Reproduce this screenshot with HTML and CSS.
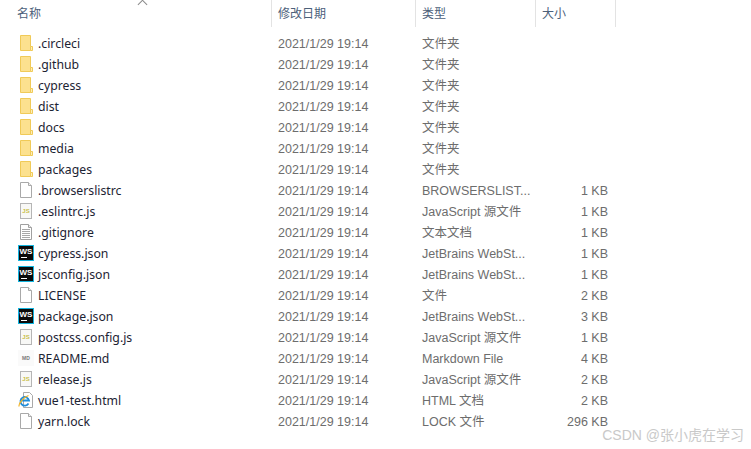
FILE: index.html
```html
<!DOCTYPE html>
<html lang="zh">

<head>
  <meta charset="UTF-8">
  <title>文件列表</title>
  <link rel="stylesheet" href="styles.css">
</head>

<body>
  <svg class="defs" width="0" height="0">
    <symbol id="i-folder" viewBox="0 0 16 16">
      <path d="M2.500.5h10v15h-10z" fill="#fce18f" stroke="#f0ca58" />
      <path d="M12.500 11.500h2v4h-2z" fill="#fdeeb8" stroke="#f0ca58" />
    </symbol>
    <symbol id="i-file" viewBox="0 0 16 16">
      <path d="M2.500.5h8l3 3v12h-11z" fill="#fff" stroke="#a9a9a9" />
      <path d="M10.500.5v3h3" fill="#f2f2f2" stroke="#a9a9a9" />
    </symbol>
    <symbol id="i-text" viewBox="0 0 16 16">
      <path d="M2.500.5h8l3 3v12h-11z" fill="#fff" stroke="#a0a0a0" />
      <path d="M10.500.5v3h3" fill="#eee" stroke="#a0a0a0" />
      <path d="M4 5.500h8M4 7.500h8M4 9.500h8M4 11.500h8M4 13.500h8" stroke="#a8a8a8" />
    </symbol>
    <symbol id="i-html" viewBox="0 0 16 16">
      <path d="M5.500.5h6l3 3v12h-9z" fill="#fff" stroke="#a9a9a9" />
      <path d="M10.500 11.500A4.300 4.300 0 1 1 11 8.500H3.500" fill="none" stroke="#1f8ddb" stroke-width="1.800" />
      <path d="M1 14.500C.5 11 6 5 10.500 3.500" fill="none" stroke="#f0b429" stroke-width="1.200" />
    </symbol>
  </svg>

  <div class="list-head">
    <div class="head-cell head-name">名称<span class="sort-arrow"></span></div>
    <div class="head-cell">修改日期</div>
    <div class="head-cell">类型</div>
    <div class="head-cell">大小</div>
  </div>

  <div class="list-body">
    <div class="row"><span class="name"><svg class="icon"><use href="#i-folder" /></svg>.circleci</span><span>2021/1/29 19:14</span><span>文件夹</span><span class="size"></span></div>
    <div class="row"><span class="name"><svg class="icon"><use href="#i-folder" /></svg>.github</span><span>2021/1/29 19:14</span><span>文件夹</span><span class="size"></span></div>
    <div class="row"><span class="name"><svg class="icon"><use href="#i-folder" /></svg>cypress</span><span>2021/1/29 19:14</span><span>文件夹</span><span class="size"></span></div>
    <div class="row"><span class="name"><svg class="icon"><use href="#i-folder" /></svg>dist</span><span>2021/1/29 19:14</span><span>文件夹</span><span class="size"></span></div>
    <div class="row"><span class="name"><svg class="icon"><use href="#i-folder" /></svg>docs</span><span>2021/1/29 19:14</span><span>文件夹</span><span class="size"></span></div>
    <div class="row"><span class="name"><svg class="icon"><use href="#i-folder" /></svg>media</span><span>2021/1/29 19:14</span><span>文件夹</span><span class="size"></span></div>
    <div class="row"><span class="name"><svg class="icon"><use href="#i-folder" /></svg>packages</span><span>2021/1/29 19:14</span><span>文件夹</span><span class="size"></span></div>
    <div class="row"><span class="name"><svg class="icon"><use href="#i-file" /></svg>.browserslistrc</span><span>2021/1/29 19:14</span><span>BROWSERSLIST...</span><span class="size">1 KB</span></div>
    <div class="row"><span class="name"><i class="icon-js">JS</i>.eslintrc.js</span><span>2021/1/29 19:14</span><span>JavaScript 源文件</span><span class="size">1 KB</span></div>
    <div class="row"><span class="name"><svg class="icon"><use href="#i-text" /></svg>.gitignore</span><span>2021/1/29 19:14</span><span>文本文档</span><span class="size">1 KB</span></div>
    <div class="row"><span class="name"><i class="icon-ws">WS</i>cypress.json</span><span>2021/1/29 19:14</span><span>JetBrains WebSt...</span><span class="size">1 KB</span></div>
    <div class="row"><span class="name"><i class="icon-ws">WS</i>jsconfig.json</span><span>2021/1/29 19:14</span><span>JetBrains WebSt...</span><span class="size">1 KB</span></div>
    <div class="row"><span class="name"><svg class="icon"><use href="#i-file" /></svg>LICENSE</span><span>2021/1/29 19:14</span><span>文件</span><span class="size">2 KB</span></div>
    <div class="row"><span class="name"><i class="icon-ws">WS</i>package.json</span><span>2021/1/29 19:14</span><span>JetBrains WebSt...</span><span class="size">3 KB</span></div>
    <div class="row"><span class="name"><i class="icon-js">JS</i>postcss.config.js</span><span>2021/1/29 19:14</span><span>JavaScript 源文件</span><span class="size">1 KB</span></div>
    <div class="row"><span class="name"><i class="icon-md">MD</i>README.md</span><span>2021/1/29 19:14</span><span>Markdown File</span><span class="size">4 KB</span></div>
    <div class="row"><span class="name"><i class="icon-js">JS</i>release.js</span><span>2021/1/29 19:14</span><span>JavaScript 源文件</span><span class="size">2 KB</span></div>
    <div class="row"><span class="name"><svg class="icon"><use href="#i-html" /></svg>vue1-test.html</span><span>2021/1/29 19:14</span><span>HTML 文档</span><span class="size">2 KB</span></div>
    <div class="row"><span class="name"><svg class="icon"><use href="#i-file" /></svg>yarn.lock</span><span>2021/1/29 19:14</span><span>LOCK 文件</span><span class="size">296 KB</span></div>
  </div>

  <div class="watermark">CSDN @张小虎在学习</div>
</body>

</html>
```

FILE: styles.css
```css
body {
  margin: 0;
  width: 751px;
  height: 449px;
  overflow: hidden;
  background-color: #fff;
  font-family: "Noto Sans CJK SC", "Liberation Sans", sans-serif;
  font-size: 12px;
  color: #5f6a76;
}

.defs {
  position: absolute;
}

.list-head {
  display: grid;
  grid-template-columns: 272px 144px 120px 80px;
  height: 27px;
}

.head-cell {
  border-right: 1px solid #e3e3e3;
  padding-left: 6px;
  line-height: 26px;
  color: #4c607a;
}

.head-name {
  position: relative;
  padding-left: 17px;
}

.sort-arrow {
  position: absolute;
  left: 139px;
  top: 1px;
  width: 6px;
  height: 6px;
  border-top: 1px solid #8a8a8a;
  border-left: 1px solid #8a8a8a;
  transform: rotate(45deg);
}

.list-body {
  padding-top: 7px;
}

.row {
  display: grid;
  grid-template-columns: 272px 144px 120px 72px;
  height: 21px;
  line-height: 21px;
  font-family: "Liberation Sans", "Noto Sans CJK SC", sans-serif;
  font-size: 12.500px;
  color: #6d6d6d;
  white-space: nowrap;
}

.row span {
  padding-left: 6px;
}

.row .name {
  display: flex;
  align-items: flex-start;
  gap: 4px;
  padding-left: 18px;
  font-family: "Noto Sans", "Liberation Sans", sans-serif;
  font-size: 12.250px;
  line-height: 19px;
  color: #1c2333;
}

.row .size {
  padding: 0;
  text-align: right;
}

.icon {
  flex: none;
  width: 16px;
  height: 16px;
  margin-top: 1px;
}

.icon-js,
.icon-ws,
.icon-md {
  flex: none;
  box-sizing: border-box;
  width: 16px;
  height: 16px;
  margin-top: 1px;
  text-align: center;
  font-family: "Liberation Sans", sans-serif;
  font-style: normal;
  font-weight: bold;
}

.icon-js {
  width: 12px;
  margin-left: 2px;
  margin-right: 2px;
  padding-top: 3px;
  background-color: #f8f8f6;
  border: 1px solid #b5b5b5;
  font-size: 6px;
  line-height: 9px;
  color: #c9c04a;
}

.icon-ws {
  padding-top: 1px;
  background-color: #0b0b0b;
  border: 1px solid #12b4de;
  font-size: 8px;
  line-height: 9px;
  color: #fff;
  background-image: linear-gradient(#fff, #fff);
  background-repeat: no-repeat;
  background-size: 6px 1px;
  background-position: 2px 11px;
}

.icon-md {
  background-color: #fafafa;
  font-size: 5px;
  line-height: 16px;
  color: #777;
}

.watermark {
  position: absolute;
  right: 7px;
  top: 426px;
  font-family: "Liberation Sans", "Noto Sans CJK SC", sans-serif;
  font-size: 14px;
  line-height: 18px;
  color: #c9c9c9;
}
```
